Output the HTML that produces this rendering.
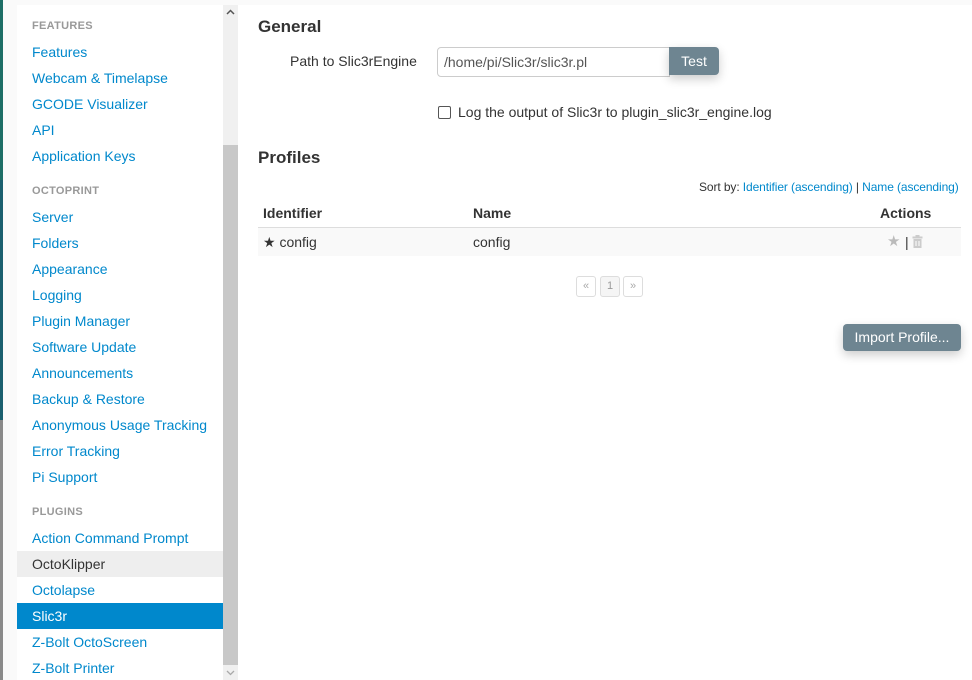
<!DOCTYPE html>
<html><head><meta charset="utf-8"><style>
*{margin:0;padding:0;box-sizing:border-box}
body{width:972px;height:680px;overflow:hidden;background:#fafafa;font-family:"Liberation Sans",Arial,sans-serif;font-size:14px;position:relative;color:#333}
.abs{position:absolute;white-space:nowrap}
.strip{position:absolute;left:0;width:3px}
.side{position:absolute;left:17px;top:5px;width:206px;height:675px;background:#fff}
.hd{position:absolute;left:32px;font-size:11px;font-weight:bold;color:#999;letter-spacing:.3px}
.lk{position:absolute;left:32px;color:#0088cc;font-size:14px;line-height:17px}
.row{position:absolute;left:17px;width:206px;height:26px}
.main{position:absolute;left:238px;top:5px;width:734px;height:675px;background:#fff}
h3{position:absolute;font-size:17px;font-weight:bold;color:#333}
.blue{color:#0088cc}
</style></head><body>
<div class="strip" style="top:0;height:180px;background:#1e6e66"></div>
<div class="strip" style="top:180px;height:240px;background:#1a5f6e"></div>
<div class="strip" style="top:420px;height:260px;background:#8a8a8a"></div>

<div class="side"></div>
<div class="row" style="top:551px;background:#eeeeee"></div>
<div class="row" style="top:603px;background:#0088cc"></div>

<div class="hd" style="top:20px">FEATURES</div>
<div class="lk" style="top:44px">Features</div>
<div class="lk" style="top:70px">Webcam &amp; Timelapse</div>
<div class="lk" style="top:96px">GCODE Visualizer</div>
<div class="lk" style="top:122px">API</div>
<div class="lk" style="top:148px">Application Keys</div>
<div class="hd" style="top:185px">OCTOPRINT</div>
<div class="lk" style="top:209px">Server</div>
<div class="lk" style="top:235px">Folders</div>
<div class="lk" style="top:261px">Appearance</div>
<div class="lk" style="top:287px">Logging</div>
<div class="lk" style="top:313px">Plugin Manager</div>
<div class="lk" style="top:339px">Software Update</div>
<div class="lk" style="top:365px">Announcements</div>
<div class="lk" style="top:391px">Backup &amp; Restore</div>
<div class="lk" style="top:417px">Anonymous Usage Tracking</div>
<div class="lk" style="top:443px">Error Tracking</div>
<div class="lk" style="top:469px">Pi Support</div>
<div class="hd" style="top:506px">PLUGINS</div>
<div class="lk" style="top:530px">Action Command Prompt</div>
<div class="lk" style="top:556px;color:#333">OctoKlipper</div>
<div class="lk" style="top:582px">Octolapse</div>
<div class="lk" style="top:608px;color:#fff">Slic3r</div>
<div class="lk" style="top:634px">Z-Bolt OctoScreen</div>
<div class="lk" style="top:660px">Z-Bolt Printer</div>

<div class="abs" style="left:223px;top:5px;width:15px;height:140px;background:#f0f0f0"></div>
<div class="abs" style="left:223px;top:145px;width:15px;height:520px;background:#c8c8c8"></div>
<div class="abs" style="left:223px;top:665px;width:15px;height:15px;background:#f0f0f0"></div>
<svg class="abs" style="left:226px;top:9px" width="9" height="6"><path d="M1 5 L4.5 1.5 L8 5" stroke="#555" stroke-width="1.5" fill="none"/></svg>
<svg class="abs" style="left:226px;top:670px" width="9" height="6"><path d="M1 1 L4.5 4.5 L8 1" stroke="#aaa" stroke-width="1.3" fill="none"/></svg>

<div class="main"></div>
<h3 style="left:258px;top:17px">General</h3>
<div class="abs" style="left:290px;top:53px;font-size:14px">Path to Slic3rEngine</div>
<div class="abs" style="left:437px;top:47px;width:233px;height:30px;border:1px solid #ccc;border-radius:4px 0 0 4px;padding:6px 6px;font-size:14px;color:#555">/home/pi/Slic3r/slic3r.pl</div>
<div class="abs" style="left:669px;top:47px;width:50px;height:28px;background:#6e8591;color:#fff;border-radius:0 4px 4px 0;text-align:center;line-height:28px;font-size:14px;box-shadow:0 4px 10px rgba(0,0,0,.2)">Test</div>
<div class="abs" style="left:438px;top:106px;width:13px;height:13px;border:1px solid #555;border-radius:2px"></div>
<div class="abs" style="left:458px;top:104px">Log the output of Slic3r to plugin_slic3r_engine.log</div>

<h3 style="left:258px;top:148px">Profiles</h3>
<div class="abs" style="left:699px;top:180px;font-size:12px;letter-spacing:-0.1px">Sort by: <span class="blue">Identifier (ascending)</span> | <span class="blue">Name (ascending)</span></div>
<div class="abs" style="left:263px;top:205px;font-weight:bold">Identifier</div>
<div class="abs" style="left:473px;top:205px;font-weight:bold">Name</div>
<div class="abs" style="left:880px;top:205px;font-weight:bold">Actions</div>
<div class="abs" style="left:258px;top:227px;width:703px;height:29px;background:#f9f9f9;border-top:1px solid #ddd"></div>
<div class="abs" style="left:263px;top:234px">★ config</div>
<div class="abs" style="left:473px;top:234px">config</div>
<div class="abs" style="left:887px;top:232px;color:#bbb;font-size:15px">★</div>
<div class="abs" style="left:905px;top:234px;color:#333">|</div>
<svg class="abs" style="left:912px;top:235px" width="11" height="13"><rect x="0.5" y="1.5" width="10" height="2" fill="#ccc"/><rect x="3.5" y="0" width="4" height="2" fill="#ccc"/><rect x="1.5" y="4" width="8" height="9" fill="#ccc"/><path d="M4 6v5M7 6v5" stroke="#fff" stroke-width="1"/></svg>

<div class="abs" style="left:576px;top:276px;width:20px;height:21px;border:1px solid #ddd;border-radius:3px;text-align:center;font-size:11px;line-height:19px;color:#aaa">«</div>
<div class="abs" style="left:600px;top:276px;width:20px;height:21px;border:1px solid #ddd;border-radius:3px;background:#f5f5f5;text-align:center;font-size:11px;line-height:19px;color:#999">1</div>
<div class="abs" style="left:623px;top:276px;width:20px;height:21px;border:1px solid #ddd;border-radius:3px;text-align:center;font-size:11px;line-height:19px;color:#aaa">»</div>

<div class="abs" style="left:843px;top:324px;width:118px;height:27px;background:#6e8591;color:#fff;border-radius:4px;text-align:center;line-height:27px;box-shadow:0 4px 10px rgba(0,0,0,.2)">Import Profile...</div>
</body></html>
